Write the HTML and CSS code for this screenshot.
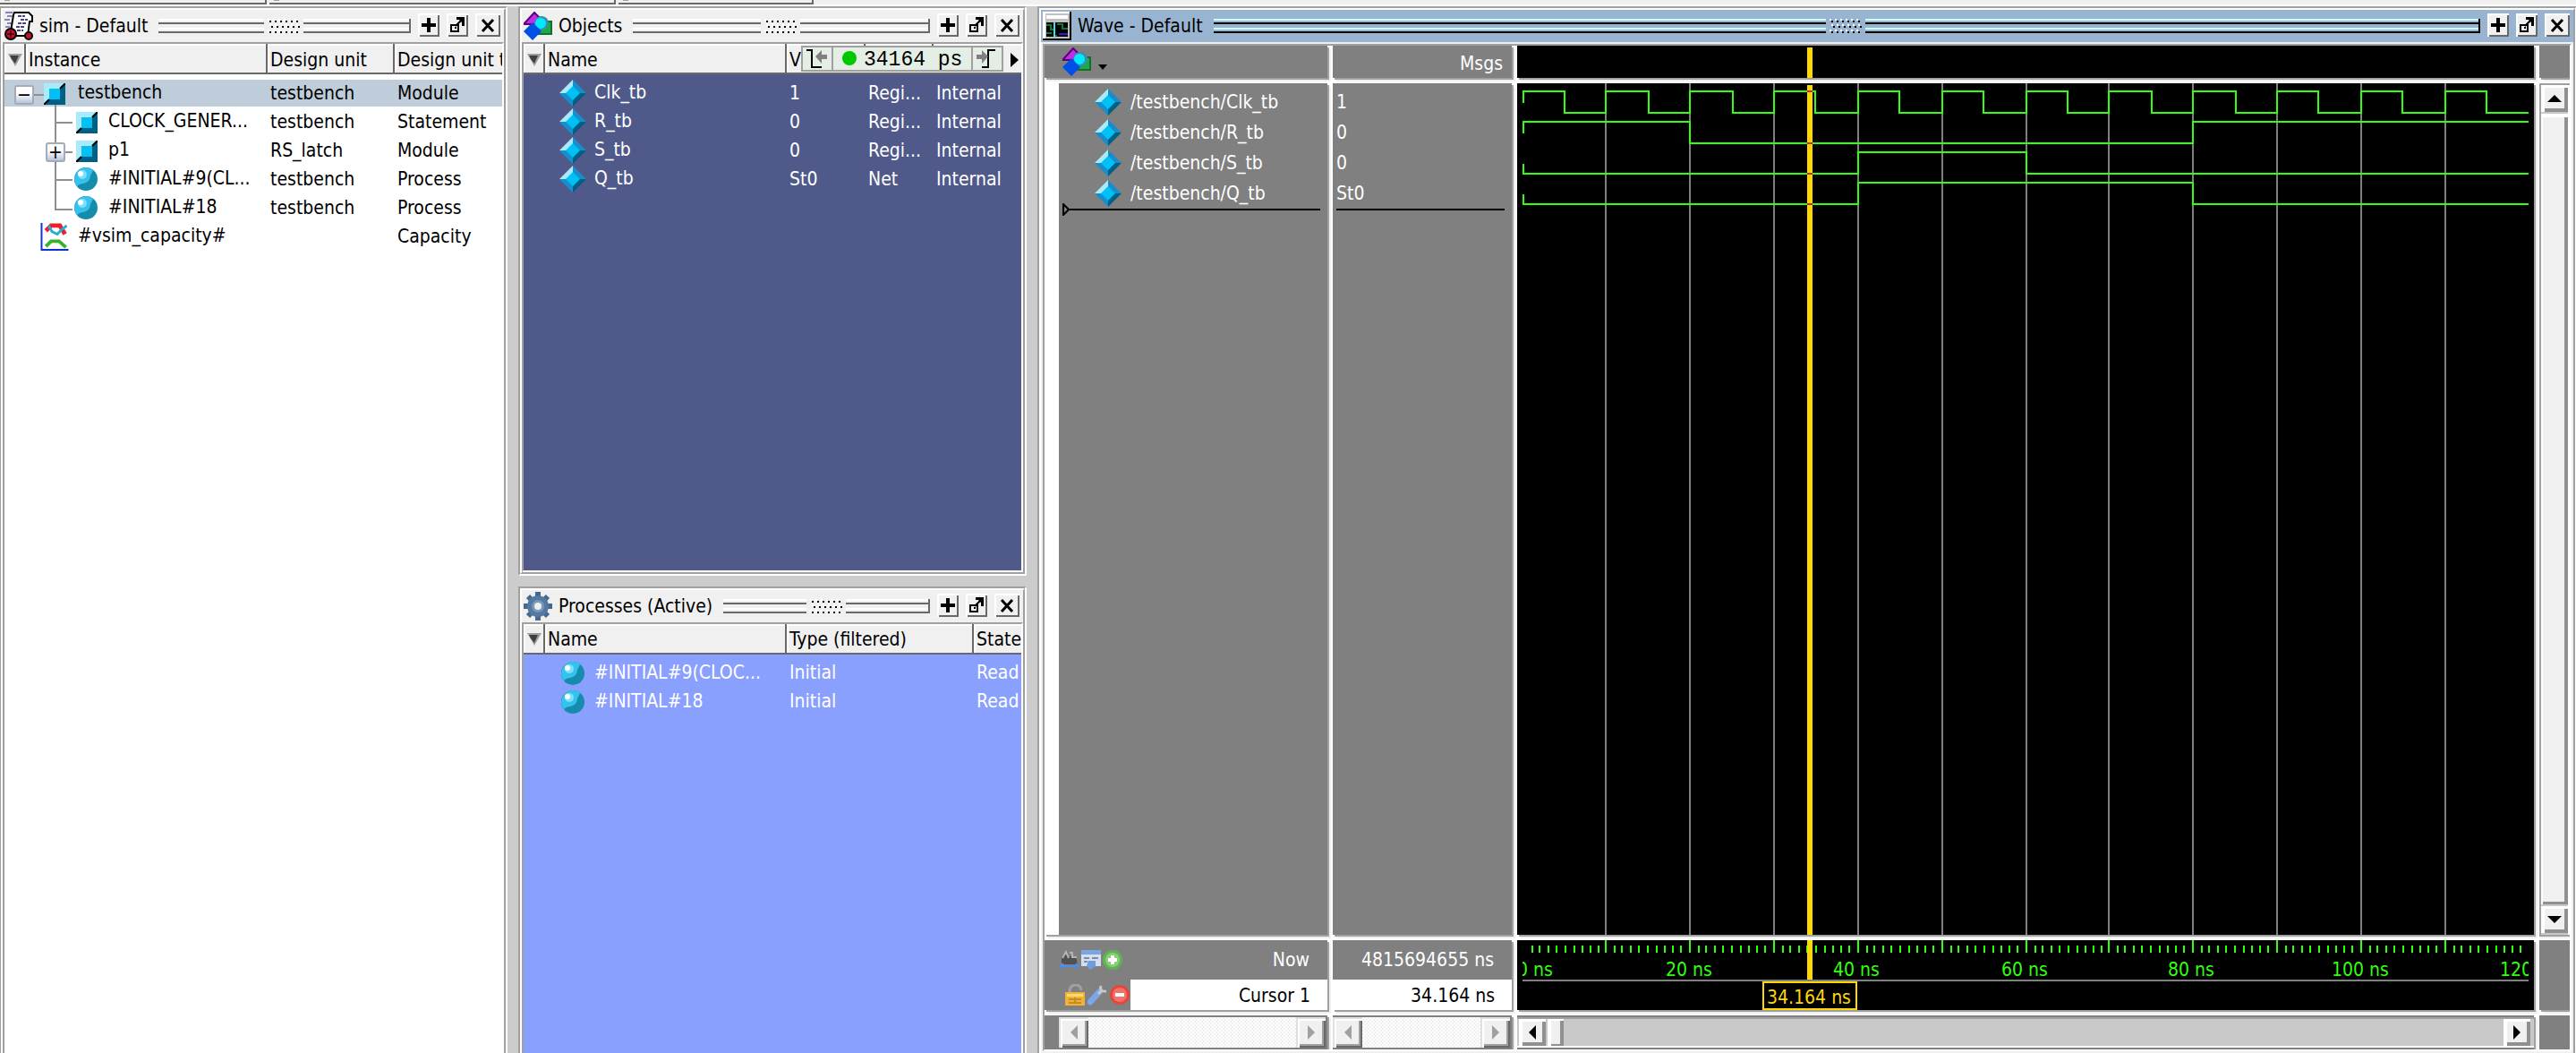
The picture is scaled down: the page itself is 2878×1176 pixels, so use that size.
FILE: index.html
```html
<!DOCTYPE html>
<html lang="en">
<head>
<meta charset="utf-8">
<title>Simulation - Wave</title>
<link rel="stylesheet" href="styles.css">
</head>
<body>
<svg class="sprite" aria-hidden="true">
  <symbol id="plus" viewBox="0 0 24 26"><path d="M12 5v16M4 13h16" stroke="#000" stroke-width="4" fill="none"/></symbol>
  <symbol id="undock" viewBox="0 0 24 26"><path d="M5 13h8v7h-8zM9 16h2M10 14l8-8" stroke="#000" stroke-width="2" fill="none"/><path d="M11 4h9v10h-3v-4l-3-3h-3z"/></symbol>
  <symbol id="close" viewBox="0 0 28 26"><path d="M8 7l12 13M20 7L8 20" stroke="#000" stroke-width="3" fill="none"/></symbol>
  <symbol id="dots" viewBox="0 0 36 16"><g stroke-width="2" stroke-dasharray="2 4"><path class="dot-light" d="M0 1h34M2 7h34M0 13h34"/><path class="dot-dark" d="M2 3h34M4 9h32M2 15h34"/></g></symbol>
  <symbol id="cube" viewBox="0 0 24 24"><path fill="#aaeafa" d="M0 0h24L0 24z"/><path fill="#005f85" d="M24 0v24H0z"/><path fill="#00c0f5" d="M6 6h12v12H6z"/><path d="M24 0l-6 6M6 18l-6 6" stroke="#000" stroke-width="2"/></symbol>
  <symbol id="sphere" viewBox="0 0 26 26"><circle cx="13" cy="13" r="13" fill="#168cac"/><path fill="#34c3ef" d="M13 0a13 13 0 0 0-10 21q3-3 7-3 8-2 8-9l3-6Q18 0 13 0z"/><circle cx="9" cy="8" r="5" fill="#7ddff8"/><circle cx="7" cy="7" r="3" fill="#fff"/></symbol>
  <symbol id="diamond" viewBox="0 0 30 30"><path fill="#aaeafa" d="M15 0v15H0z"/><path fill="#168ecb" d="M15 0l15 15H15zM0 15h15v15z"/><path fill="#005f85" d="M15 15h15L15 30z"/><path fill="#00c0f5" d="M15 7l8 8-8 8-8-8z"/></symbol>
  <symbol id="objects" viewBox="0 0 32 32"><path d="M15 11h16v14H15z" fill="#18ad42" stroke="#176f2e" stroke-width="2"/><path d="M1 13L12 1l9 9-8 4H1z" fill="#c42be8" stroke="#5c007c" stroke-width="2"/><circle cx="20" cy="13" r="8" fill="#3c8dad"/><circle cx="19" cy="13" r="6" fill="#00eaff"/><path d="M10 12l10 10-10 10L0 22z" fill="#0050e6"/></symbol>
  <symbol id="simicon" viewBox="0 0 32 32"><path d="M1 1h8M3 5h6M0 9h6M3 13h5M1 17h5" stroke="#8585bd" stroke-width="2"/><path d="M11 1h16l4 4v6h-3l-2 16H12L7 22 10 4z" fill="#fff" stroke="#000" stroke-width="2"/><path d="M15 5h8M18 9h8M15 13h9M13 17h10M14 21h7" stroke="#45458d" stroke-width="2" stroke-dasharray="4 1"/><circle cx="7" cy="25" r="6" fill="#c8102e" stroke="#000" stroke-width="2"/><circle cx="27" cy="27" r="4" fill="#c8102e" stroke="#000" stroke-width="2"/><path d="M7 21v8M3 25h8" stroke="#000"/></symbol>
  <symbol id="gear" viewBox="0 0 32 32"><g stroke="#44688f" stroke-width="6"><path d="M16 0v32M0 16h32M5 5l22 22M27 5L5 27"/></g><circle cx="16" cy="16" r="12" fill="#54789f"/><circle cx="16" cy="16" r="7" fill="#7898b8"/><circle cx="16" cy="16" r="4" fill="#f0f0f0"/></symbol>
  <symbol id="waveicon" viewBox="0 0 32 32"><path d="M0 0h32v32H0z"/><path fill="#fff" d="M0 0h30v30H0z"/><path fill="#c0c0c0" d="M3 2h27v28H3z"/><path fill="#fff" d="M4 4h24v4H4z"/><path d="M4 12h24v16H4z"/><path d="M4 15h5v5h4v7h3M16 14h6v5h6M4 24h6" stroke="#0a7a35" stroke-width="2" fill="none"/><path d="M13 12v16" stroke="#3ae0f0" stroke-width="2"/><path d="M18 25h10" stroke="#3a14d8" stroke-width="2"/></symbol>
  <symbol id="filter" viewBox="0 0 16 14"><path fill="#a0a0a0" d="M0 0h16L8 14z"/><path fill="#404040" d="M2 2h10L8 11 4 6z"/></symbol>
  <symbol id="capacity" viewBox="0 0 32 32"><path d="M1 0v31h31" stroke="#0a30d0" stroke-width="2" fill="none"/><path d="M6 9l6-6h10l6 10" stroke="#f01e2c" stroke-width="5" fill="none"/><path d="M9 3l4 7 6 3 5-5 6-5" stroke="#20b0d0" stroke-width="3" fill="none"/><path d="M6 27l6-6h9l8 7" stroke="#3ab030" stroke-width="4" fill="none"/></symbol>
</svg>

<div class="toolstrip"><span></span><span></span><span></span></div>
<main class="workspace">
  <section class="pane pane-sim"><div class="pane-inner">
    <header class="titlebar">
      <svg class="icon"><use href="#simicon"/></svg><h2>sim - Default</h2>
      <div class="grip"><i></i><svg><use href="#dots"/></svg><i></i></div>
      <button aria-label="Zoom"><svg><use href="#plus"/></svg></button><button aria-label="Undock"><svg><use href="#undock"/></svg></button><button class="wide" aria-label="Close"><svg><use href="#close"/></svg></button>
    </header>
    <div class="pane-body">
      <table>
        <colgroup><col class="c-filter"><col class="c-name"><col class="c-unit"><col></colgroup>
        <thead><tr><th><svg class="filter"><use href="#filter"/></svg></th><th>Instance</th><th>Design unit</th><th>Design unit type</th></tr></thead>
        <tbody>
          <tr class="selected"><td colspan="2"><div class="tree"><svg class="g78"><path class="guide" d="M32 18h12M57 29v3"/><use href="#cube" x="44" y="5" width="24" height="24"/></svg><button class="expander" aria-label="Collapse">−</button>testbench</div></td><td>testbench</td><td>Module</td></tr>
          <tr><td colspan="2"><div class="tree"><svg class="g112"><path class="guide" d="M57 0v32M57 17h19"/><use href="#cube" x="80" y="5" width="24" height="24"/></svg>CLOCK_GENER...</div></td><td>testbench</td><td>Statement</td></tr>
          <tr><td colspan="2"><div class="tree"><svg class="g112"><path class="guide" d="M57 0v32M57 18h19"/><use href="#cube" x="80" y="5" width="24" height="24"/></svg><button class="expander nested" aria-label="Expand">+</button>p1</div></td><td>RS_latch</td><td>Module</td></tr>
          <tr><td colspan="2"><div class="tree"><svg class="g112"><path class="guide" d="M57 0v32M57 17h19"/><use href="#sphere" x="78" y="3" width="26" height="26"/></svg>#INITIAL#9(CL...</div></td><td>testbench</td><td>Process</td></tr>
          <tr><td colspan="2"><div class="tree"><svg class="g112"><path class="guide" d="M57 0v18h19"/><use href="#sphere" x="78" y="3" width="26" height="26"/></svg>#INITIAL#18</div></td><td>testbench</td><td>Process</td></tr>
          <tr><td colspan="2"><div class="tree"><svg class="g78"><use href="#capacity" x="40" y="1" width="32" height="31"/></svg>#vsim_capacity#</div></td><td></td><td>Capacity</td></tr>
        </tbody>
      </table>
    </div>
  </div></section>

  <div class="stack">
    <section class="pane pane-objects"><div class="pane-inner">
      <header class="titlebar">
        <svg class="icon"><use href="#objects"/></svg><h2>Objects</h2>
        <div class="grip"><i></i><svg><use href="#dots"/></svg><i></i></div>
        <button aria-label="Zoom"><svg><use href="#plus"/></svg></button><button aria-label="Undock"><svg><use href="#undock"/></svg></button><button class="wide" aria-label="Close"><svg><use href="#close"/></svg></button>
      </header>
      <div class="pane-body">
        <table>
          <colgroup><col class="c-filter"><col class="c-name"><col class="c-value"><col class="c-kind"><col></colgroup>
          <thead><tr><th><svg class="filter"><use href="#filter"/></svg></th><th>Name</th><th>V</th><th></th><th></th></tr></thead>
          <tbody>
            <tr><td colspan="2"><div class="tree"><svg class="g75"><use href="#diamond" x="40" y="1" width="30" height="30"/></svg>Clk_tb</div></td><td>1</td><td>Regi...</td><td>Internal</td></tr>
            <tr><td colspan="2"><div class="tree"><svg class="g75"><use href="#diamond" x="40" y="1" width="30" height="30"/></svg>R_tb</div></td><td>0</td><td>Regi...</td><td>Internal</td></tr>
            <tr><td colspan="2"><div class="tree"><svg class="g75"><use href="#diamond" x="40" y="1" width="30" height="30"/></svg>S_tb</div></td><td>0</td><td>Regi...</td><td>Internal</td></tr>
            <tr><td colspan="2"><div class="tree"><svg class="g75"><use href="#diamond" x="40" y="1" width="30" height="30"/></svg>Q_tb</div></td><td>St0</td><td>Net</td><td>Internal</td></tr>
          </tbody>
        </table>
        <div class="timebox">
          <button aria-label="Previous time"><svg viewBox="0 0 32 25"><path d="M4 3h6v19h11" stroke="#000" stroke-width="2" fill="none"/><path fill="#808080" d="M14 10l7-7v5h6v5h-6v5z"/></svg></button>
          <output><b></b>34164 ps</output>
          <button aria-label="Next time"><svg viewBox="0 0 32 25"><path d="M10 22h7V3h8" stroke="#000" stroke-width="2" fill="none"/><path fill="#808080" d="M17 10l-7-7v5H4v5h6v5z"/></svg></button>
          <svg class="more"><path d="M0 0l9 8-9 8z"/></svg>
        </div>
      </div>
    </div></section>

    <section class="pane pane-processes"><div class="pane-inner">
      <header class="titlebar">
        <svg class="icon"><use href="#gear"/></svg><h2>Processes (Active)</h2>
        <div class="grip"><i></i><svg><use href="#dots"/></svg><i></i></div>
        <button aria-label="Zoom"><svg><use href="#plus"/></svg></button><button aria-label="Undock"><svg><use href="#undock"/></svg></button><button class="wide" aria-label="Close"><svg><use href="#close"/></svg></button>
      </header>
      <div class="pane-body">
        <table>
          <colgroup><col class="c-filter"><col class="c-name"><col class="c-type"><col></colgroup>
          <thead><tr><th><svg class="filter"><use href="#filter"/></svg></th><th>Name</th><th>Type (filtered)</th><th>State</th></tr></thead>
          <tbody>
            <tr><td colspan="2"><div class="tree"><svg class="g75"><use href="#sphere" x="42" y="3" width="26" height="26"/></svg>#INITIAL#9(CLOC...</div></td><td>Initial</td><td>Read</td></tr>
            <tr><td colspan="2"><div class="tree"><svg class="g75"><use href="#sphere" x="42" y="3" width="26" height="26"/></svg>#INITIAL#18</div></td><td>Initial</td><td>Read</td></tr>
          </tbody>
        </table>
      </div>
    </div></section>
  </div>

  <section class="pane pane-wave"><div class="pane-inner">
    <header class="titlebar">
      <svg class="icon"><use href="#waveicon"/></svg><h2>Wave - Default</h2>
      <div class="grip"><i></i><svg><use href="#dots"/></svg><i></i></div>
      <button aria-label="Zoom"><svg><use href="#plus"/></svg></button><button aria-label="Undock"><svg><use href="#undock"/></svg></button><button class="wide" aria-label="Close"><svg><use href="#close"/></svg></button>
    </header>
    <div class="wave-grid">
      <div class="cell wave-menu"><svg class="icon"><use href="#objects"/></svg><svg class="caret"><path d="M0 0h10L5 6z"/></svg></div>
      <div class="cell msgs">Msgs</div>
      <div class="cell black"><svg class="plot"><path fill="#ffd800" d="M324 2h6v34h-6z"/></svg></div>
      <div class="cell"></div>

      <div class="cell signals">
        <ul>
          <li><svg><use href="#diamond"/></svg>/testbench/Clk_tb</li>
          <li><svg><use href="#diamond"/></svg>/testbench/R_tb</li>
          <li><svg><use href="#diamond"/></svg>/testbench/S_tb</li>
          <li><svg><use href="#diamond"/></svg>/testbench/Q_tb</li>
        </ul>
        <div class="insert"><svg><path d="M1 1l6 6-6 6z" fill="none" stroke="#000" stroke-width="2"/></svg><i></i></div>
      </div>
      <div class="cell values">
        <ul><li>1</li><li>0</li><li>0</li><li>St0</li></ul>
        <div class="insert"><i></i></div>
      </div>
      <div class="cell black">
        <svg class="plot">
          <g stroke="#808080" stroke-width="2">
            <line x1="99" x2="99" y2="100%"/><line x1="193" x2="193" y2="100%"/><line x1="287" x2="287" y2="100%"/><line x1="381" x2="381" y2="100%"/><line x1="475" x2="475" y2="100%"/><line x1="569" x2="569" y2="100%"/><line x1="661" x2="661" y2="100%"/><line x1="755" x2="755" y2="100%"/><line x1="849" x2="849" y2="100%"/><line x1="943" x2="943" y2="100%"/><line x1="1037" x2="1037" y2="100%"/>
          </g>
          <rect x="324" y="2" width="6" height="100%" fill="#ffd800"/>
          <g stroke="#30ff10" stroke-width="2" fill="none">
            <path d="M7 22V9H53V33H99V9H147V33H193V9H241V33H287V9H333V33H381V9H427V33H475V9H521V33H569V9H615V33H661V9H709V33H755V9H803V33H849V9H895V33H943V9H989V33H1037V9H1083V33H1130"/>
            <path d="M7 56V43H193V67H755V43H1130"/>
            <path d="M7 90V101H381V77H569V101H1130"/>
            <path d="M7 124V135H381V111H755V135H1130"/>
          </g>
          <path d="M324 9h6M324 67h6M324 101h6M324 135h6" stroke="#d02818" stroke-width="2"/>
        </svg>
      </div>
      <div class="cell vscroll"><button aria-label="Scroll up"><svg viewBox="0 0 12 6"><path d="M0 6L6 0l6 6z"/></svg></button><div class="thumb"></div><button aria-label="Scroll down"><svg viewBox="0 0 16 8"><path d="M0 0h16L8 8z"/></svg></button></div>

      <div class="cell cursors">
        <div class="line"><span class="tools">
          <svg class="mini" viewBox="0 0 22 22"><path d="M2 16V8l6-7 2 6h8l2 9z" fill="#505050"/><path d="M3 9l4-7 3 7M11 3h3v6M15 8h4" stroke="#b4b4b4" stroke-width="2" fill="none"/><path d="M1 18h20M4 15l-3 3 3 3M18 15l3 3-3 3" stroke="#4a90e2" stroke-width="2" fill="none"/></svg>
          <svg class="mini" viewBox="0 0 22 22"><path fill="#d5dff0" d="M0 0h22v18H0z"/><path fill="#7aa7e4" d="M0 0h22v5H0z"/><path d="M3 9h6M12 9h7M3 13h4" stroke="#7b8ca8" stroke-width="2"/><path fill="#6c9de0" d="M8 12h8v6l-6 4-4-4z"/></svg>
          <svg class="mini" viewBox="0 0 22 22"><circle cx="11" cy="11" r="11" fill="#5eb451"/><circle cx="11" cy="11" r="8" fill="#8bcc7c"/><path d="M11 6v10M6 11h10" stroke="#fff" stroke-width="4"/></svg>
        </span><span>Now</span></div>
        <div class="line"><span class="tools second">
          <svg class="mini" viewBox="0 0 22 24"><path d="M5 9q0-8 7-8 5 0 6 6" fill="none" stroke="#a0a0a0" stroke-width="3"/><path fill="#efb23c" d="M0 9h22v15H0z"/><path fill="#ffdb76" d="M2 11h18v3H2z"/><path d="M4 17h14M4 21h14M11 15v7" stroke="#c98a1c" stroke-width="2"/></svg>
          <svg class="mini" viewBox="0 0 22 24"><path d="M3 20L13 9" stroke="#7ca5ea" stroke-width="7" stroke-linecap="round"/><path d="M12 11l5-5M15 2q-2 7 6 6" stroke="#c8c8c8" stroke-width="3" fill="none"/></svg>
          <svg class="mini" viewBox="0 0 22 22"><circle cx="11" cy="11" r="11" fill="#e8453a"/><circle cx="11" cy="11" r="8" fill="#f0736a"/><path d="M6 11h10" stroke="#fff" stroke-width="4"/></svg>
        </span><span class="entry">Cursor 1</span></div>
      </div>
      <div class="cell times"><div class="line"><span>4815694655 ns</span></div><div class="line"><span class="entry">34.164 ns</span></div></div>
      <div class="cell black">
        <svg class="plot ruler">
          <defs>
            <path id="minor" d="M10 6v8M18 6v8M28 6v8M37 6v8M47 6v8M57 6v8M66 6v8M75 6v8M84 6v8"/>
            <clipPath id="span"><rect x="6" y="0" width="1124" height="78"/></clipPath>
          </defs>
          <g clip-path="url(#span)">
            <g stroke="#30ff10" stroke-width="2">
              <use href="#minor" x="7"/><use href="#minor" x="99"/><use href="#minor" x="193"/><use href="#minor" x="287"/><use href="#minor" x="381"/><use href="#minor" x="475"/><use href="#minor" x="569"/><use href="#minor" x="661"/><use href="#minor" x="755"/><use href="#minor" x="849"/><use href="#minor" x="943"/><use href="#minor" x="1037"/>
              <path d="M99 0v14M193 0v14M287 0v14M381 0v14M475 0v14M569 0v14M661 0v14M755 0v14M849 0v14M943 0v14M1037 0v14"/>
            </g>
            <g class="ticks"><text x="20">0 ns</text><text x="192">20 ns</text><text x="379">40 ns</text><text x="567">60 ns</text><text x="753">80 ns</text><text x="942">100 ns</text><text x="1130">120 ns</text></g>
            <path d="M6 45h1124" stroke="#808080" stroke-width="2"/>
          </g>
          <path fill="#ffd800" d="M324 0h6v44h-6z"/>
          <rect x="275" y="47" width="104" height="30" fill="#000" stroke="#ffd800" stroke-width="2"/>
          <text class="flag" x="326" y="71">34.164 ns</text>
        </svg>
      </div>
      <div class="cell"></div>

      <div class="cell hscroll disabled first"><button disabled aria-label="Scroll left"><svg viewBox="0 0 8 16"><path d="M8 0v16L0 8z"/></svg></button><div class="track"></div><button disabled aria-label="Scroll right"><svg viewBox="0 0 8 16"><path d="M0 0v16l8-8z"/></svg></button></div>
      <div class="cell hscroll disabled"><button disabled aria-label="Scroll left"><svg viewBox="0 0 8 16"><path d="M8 0v16L0 8z"/></svg></button><div class="track"></div><button disabled aria-label="Scroll right"><svg viewBox="0 0 8 16"><path d="M0 0v16l8-8z"/></svg></button></div>
      <div class="cell hscroll"><button aria-label="Scroll left"><svg viewBox="0 0 8 16"><path d="M8 0v16L0 8z"/></svg></button><div class="thumb"></div><div class="track"></div><button aria-label="Scroll right"><svg viewBox="0 0 8 16"><path d="M0 0v16l8-8z"/></svg></button></div>
      <div class="cell"></div>
    </div>
  </div></section>
</main>
</body>
</html>
```
FILE: styles.css
```css
* { box-sizing: border-box; }
body {
  margin: 0;
  height: 100vh;
  display: flex;
  flex-direction: column;
  overflow: hidden;
  background: #ccc;
  color: #000;
  font: 21px/32px "DejaVu Sans Condensed", "DejaVu Sans", sans-serif;
}
svg { display: block; flex: none; }
button { padding: 0; border: 0; font: inherit; flex: none; }
ul { list-style: none; margin: 0; padding: 0; }
.sprite { position: absolute; width: 0; height: 0; }

.toolstrip {
  display: grid;
  grid-template-columns: 298px 387px 218px;
  gap: 3px;
  height: 7px;
  flex: none;
  background: #f0f0f0;
  border-bottom: 2px solid #fff;
}
.toolstrip span {
  border-bottom: 2px solid #696969;
  border-right: 2px solid #696969;
  background: linear-gradient(#a0a0a0, #a0a0a0) 5px 0 / 6px 1px no-repeat;
}

.workspace { flex: 1; display: flex; gap: 12px; min-height: 0; }
.stack { flex: 0 0 568px; display: flex; flex-direction: column; gap: 12px; }

.pane {
  display: flex;
  min-height: 0;
  border: 2px solid #a0a0a0;
  border-right-color: #fff;
  border-bottom-color: #fff;
}
.pane-inner {
  flex: 1;
  display: flex;
  flex-direction: column;
  min-width: 0;
  border: 2px solid #fff;
  border-right-color: #a0a0a0;
  border-bottom-color: #a0a0a0;
}
.pane-sim { flex: 0 0 568px; margin-left: -1px; }
.pane-objects { flex: 635 1 0; }
.pane-processes { flex: 522 1 0; }
.pane-wave { flex: 1; min-width: 0; margin-right: -1px; }
.pane-sim, .pane-processes, .pane-wave,
.pane-sim .pane-inner, .pane-processes .pane-inner, .pane-wave .pane-inner { border-bottom: 0; }

.titlebar {
  display: flex;
  align-items: center;
  flex: none;
  height: 36px;
  padding: 0 4px 0 2px;
  background: #f0f0f0;
}
.icon { width: 32px; height: 32px; }
.titlebar h2 { margin: 0 12px 0 7px; font: inherit; white-space: nowrap; }
.titlebar button {
  width: 24px;
  height: 26px;
  margin-left: 8px;
  margin-bottom: 2px;
  background: #f0f0f0;
  box-shadow: inset 2px 2px #fff, inset -2px -2px #696969;
}
.titlebar button.wide { width: 28px; }
.titlebar button svg { width: 100%; height: 100%; }
.grip { flex: 1; display: flex; align-items: center; gap: 4px; }
.grip i { flex: 1; height: 16px; background: linear-gradient(#fff 2px, transparent 2px 4px, #696969 4px 6px, transparent 6px 10px, #fff 10px 12px, transparent 12px 14px, #696969 14px); }
.grip i:last-child { border-right: 2px solid #696969; }
.grip svg { width: 36px; height: 16px; }
.dot-light { stroke: #fff; }
.dot-dark { stroke: #000; }

.pane-body {
  position: relative;
  flex: 1;
  min-height: 0;
  overflow: hidden;
  border: 2px solid #fff;
  border-top-color: #a0a0a0;
  border-left-color: #a0a0a0;
  background: #fff;
}
.pane-sim .pane-body, .pane-processes .pane-body { border-bottom: 0; }
.pane-objects .pane-body { background: #505a8a; color: #fff; }
.pane-processes .pane-body { background: #8aa0ff; color: #fff; }

table { width: 100%; table-layout: fixed; border-collapse: separate; border-spacing: 0; }
.c-filter { width: 24px; }
.c-name { width: 270px; }
.c-unit { width: 142px; }
.c-value { width: 88px; }
.c-kind { width: 76px; }
.c-type { width: 209px; }
th {
  height: 34px;
  padding: 3px 0 0 3px;
  overflow: hidden;
  white-space: nowrap;
  text-align: left;
  font-weight: normal;
  line-height: 28px;
  color: #000;
  background: #f0f0f0;
  border-right: 2px solid #696969;
  border-bottom: 2px solid #696969;
  box-shadow: inset 2px 2px #fff;
}
th:first-child { padding-left: 4px; }
th:last-child { border-right: 0; }
.filter { width: 16px; height: 14px; }
td { height: 32px; padding: 0 0 0 3px; overflow: hidden; white-space: nowrap; line-height: 31px; }
td:first-child { padding: 0; }
tbody::before { content: ""; display: block; height: 5px; }
.selected { background: linear-gradient(transparent 1px, #bfccd9 1px 31px, transparent 31px); }
.tree { position: relative; display: flex; gap: 4px; height: 32px; }
.tree svg { height: 32px; }
.g75 { width: 75px; }
.g78 { width: 78px; }
.g112 { width: 112px; }
.guide { stroke: #8f8f8f; stroke-width: 2; fill: none; }
.expander {
  position: absolute;
  left: 11px;
  top: 7px;
  width: 22px;
  height: 22px;
  border: 2px solid #a3abb8;
  border-radius: 3px;
  background: linear-gradient(#fff 40%, #b8c4dc);
  line-height: 16px;
}
.expander.nested { left: 46px; }

.timebox {
  position: absolute;
  left: 310px;
  right: 0;
  top: 2px;
  height: 30px;
  display: flex;
  background: #f0f0f0;
  color: #000;
}
.timebox button, .timebox output { height: 29px; background: #e4eee4; border: 2px solid #a0a0a0; }
.timebox button { width: 36px; }
.timebox button svg { width: 32px; height: 25px; }
.timebox output {
  display: flex;
  align-items: center;
  gap: 8px;
  padding: 2px 10px 0 10px;
  border-width: 2px 0;
  font: 23px/24px "Liberation Mono", monospace;
  white-space: pre;
}
.timebox b { width: 16px; height: 16px; margin-bottom: 4px; border-radius: 50%; background: #00c800; }
.timebox .more { width: 9px; height: 16px; margin: 8px 0 0 8px; }

.pane-wave .titlebar { background: #99b4d1; }
.pane-wave .grip i { background: linear-gradient(#cff 2px, transparent 2px 4px, #000 4px 6px, transparent 6px 10px, #cff 10px 12px, transparent 12px 14px, #000 14px); }
.pane-wave .grip i:last-child { border-color: #000; }

.wave-grid {
  flex: 1;
  min-height: 0;
  display: grid;
  grid-template: 36px minmax(0, 1fr) 78px 38px / 316px 200px minmax(0, 1fr) 34px;
  gap: 6px;
  overflow: hidden;
  background: #fff;
  color: #fff;
  border: 2px solid #a0a0a0;
  border-right-color: #fff;
  border-bottom-color: #fff;
  outline: 2px solid #f0f0f0;
  margin: 2px;
}
.cell { background: #808080; box-shadow: 2px 2px #a0a0a0, 4px 4px #f0f0f0; min-width: 0; }
.cell.black { background: #000; overflow: hidden; }
.plot { width: 100%; height: 100%; }
.wave-menu { display: flex; align-items: center; gap: 8px; padding-left: 20px; }
.caret { width: 10px; height: 6px; margin-top: 12px; }
.msgs { padding: 4px 10px 0 0; text-align: right; }

.signals { border-left: 16px solid #fff; padding: 4px 8px 0 4px; }
.signals li { display: flex; align-items: center; gap: 10px; height: 34px; padding-left: 36px; }
.signals li svg { width: 30px; height: 30px; }
.values { padding: 4px 8px 0 4px; }
.values li { height: 34px; line-height: 34px; }
.insert { display: flex; align-items: center; height: 14px; margin-top: -6px; }
.insert svg { width: 8px; height: 14px; }
.insert i { flex: 1; height: 2px; background: #000; }

.line { display: flex; height: 44px; line-height: 44px; justify-content: flex-end; padding-right: 20px; }
.line + .line { height: 34px; line-height: 36px; padding: 0; }
.tools { display: flex; flex: 1; align-items: center; gap: 2px; padding-left: 17px; }
.tools.second { flex: none; gap: 3px; width: 96px; padding-left: 23px; }
.mini { width: 22px; height: 22px; }
.second .mini { height: 24px; }
.second .mini:last-child { height: 22px; }
.entry { flex: 1; padding-right: 19px; background: #fff; color: #000; text-align: right; }
.ticks { fill: #30ff10; text-anchor: middle; }
.ticks text { transform: translateY(40px); }
.flag { fill: #ffd800; text-anchor: middle; }

.hscroll { display: flex; padding: 4px 4px 4px 2px; }
.hscroll button, .vscroll button {
  width: 30px;
  height: 30px;
  display: grid;
  place-items: center;
  background: #f0f0f0;
  box-shadow: inset 4px 3px #fff, inset -4px -4px #909090;
}
.hscroll button svg { width: 8px; height: 16px; }
.hscroll { background: linear-gradient(#808080 2px, #a0a0a0 2px 4px, #c8c8c8 4px 34px, #fff 34px 36px, #808080 36px); }
.hscroll .track { flex: 1; background: #c8c8c8; }
.hscroll .thumb { width: 18px; margin-left: 2px; background: #f0f0f0; box-shadow: inset 4px 2px #fff, inset -4px -2px #909090; }
.hscroll.disabled { padding: 2px 2px 2px 0; background: #808080; }
.hscroll.disabled.first { padding-left: 16px; }
.hscroll.disabled button { width: 33px; height: 34px; box-shadow: inset 2px 2px #e0e0e0, inset 4px 4px #fff, inset -2px -2px #696969, inset -4px -4px #a0a0a0; }
.hscroll.disabled button path { fill: #a0a0a0; }
.hscroll.disabled .track { background: repeating-conic-gradient(#f0f0f0 0 25%, #fff 0 50%) 0 0 / 4px 4px; }
.vscroll {
  display: flex;
  flex-direction: column;
  gap: 2px;
  padding: 2px;
  background: #c8c8c8;
  border: 0;
  box-shadow: inset 2px 2px #a0a0a0, inset -2px 0 #fff, 0 2px #a0a0a0, 0 4px #f0f0f0;
}
.vscroll .thumb { flex: 1; background: #f0f0f0; box-shadow: inset 2px 4px #fff, inset -4px -3px #909090; }
.vscroll button svg { width: 16px; height: 8px; }
```
